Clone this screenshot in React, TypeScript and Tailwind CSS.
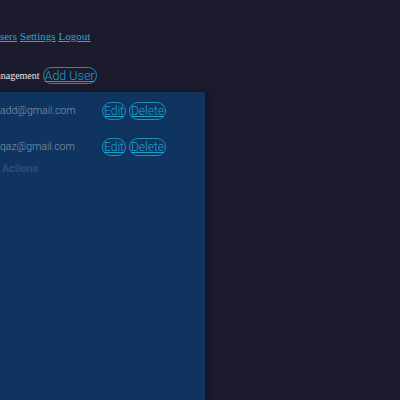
import React from "react";

const btn =
  "rounded-full border border-[#1f8fb8] px-[1px] leading-[16px] text-[12px] text-[#1aa3d1] underline font-light";

export default function App() {
  const rows = ["add@gmail.com", "qaz@gmail.com"];
  return (
    <div className="w-[400px] h-[400px] overflow-hidden bg-[#1b1b2d] relative" style={{ fontFamily: "Roboto, sans-serif" }}>
      <nav className="absolute left-[-8px] top-[28px] flex gap-[3px] text-[11px] text-[#2aa6d6] underline" style={{ fontFamily: '"Liberation Serif", serif' }}>
        <a>Users</a>
        <a>Settings</a>
        <a>Logout</a>
      </nav>
      <div className="absolute left-[-34px] top-[67px] flex items-center gap-[3px]">
        <span className="text-[10px] text-[#e8e8e8]" style={{ fontFamily: '"Liberation Serif", serif' }}>
          User Management
        </span>
        <button className="rounded-full border border-[#1f8fb8] px-[1px] leading-[15px] text-[12.5px] text-[#1aa3d1] underline font-light">
          Add User
        </button>
      </div>
      <div className="absolute left-0 top-[92px] w-[205px] h-[320px] bg-[#0f3460] shadow-[4px_0_8px_rgba(0,0,0,0.25)]">
        <div className="flex flex-col pt-[1px]">
          {rows.map((e) => (
            <div key={e} className="flex items-center h-[36px]">
              <span className="w-[102px] text-[10.5px] font-light text-[#8596ae]">{e}</span>
              <div className="flex gap-[3px]">
                <button className={btn}>Edit</button>
                <button className={btn}>Delete</button>
              </div>
            </div>
          ))}
          <div className="text-[10.5px] leading-[8px] font-bold text-[#2b4d7a] pl-[2px]">Actions</div>
        </div>
      </div>
    </div>
  );
}
